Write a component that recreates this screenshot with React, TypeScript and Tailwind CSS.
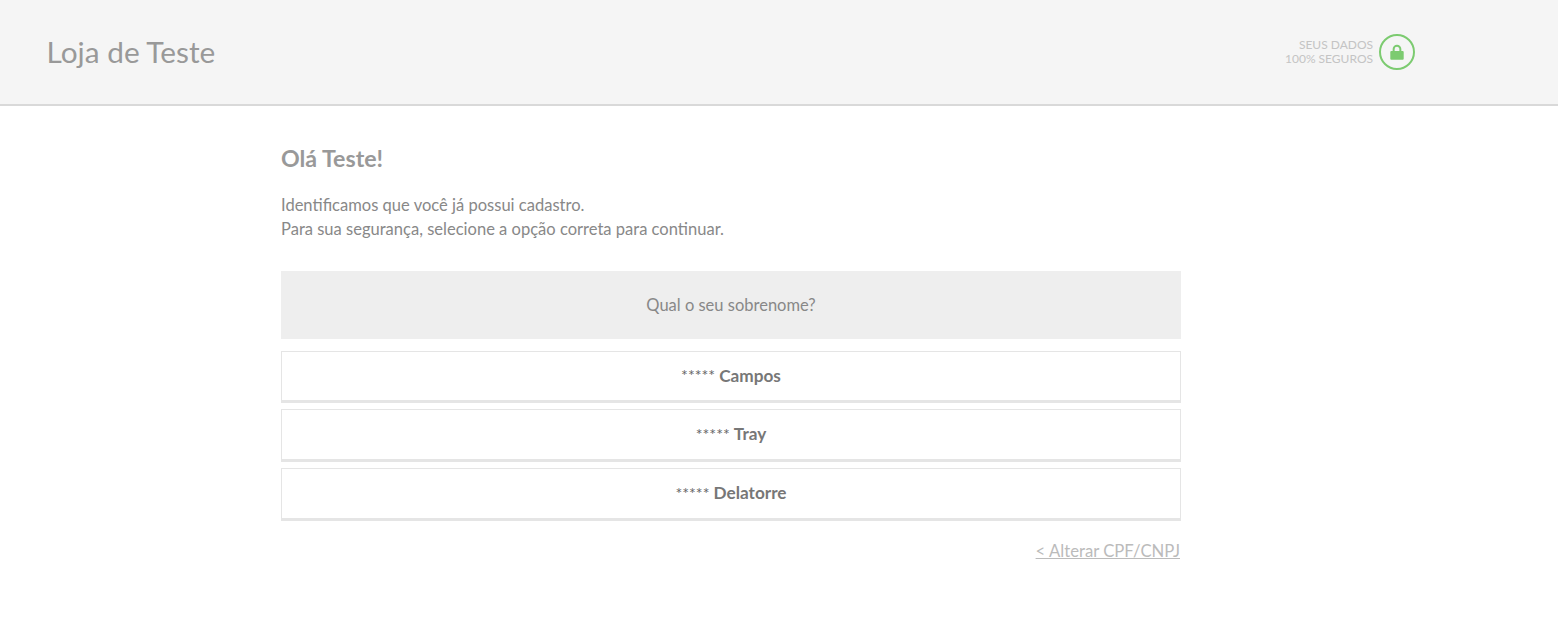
const answers = [
  { name: 'Campos' },
  { name: 'Tray' },
  { name: 'Delatorre' },
];

export default function App() {
  return (
    <div className="min-h-[627px] bg-white font-['Lato',sans-serif] text-[#888]">
      <header className="flex h-[106px] items-center justify-between border-b-2 border-[#d9d9d9] bg-[#f5f5f5] pl-[46.5px] pr-[143px]">
        <h1 className="text-[29.8px] leading-none text-[#999]">Loja de Teste</h1>
        <div className="flex items-center gap-[6px]">
          <p className="text-right text-[12px] leading-[14px] text-[#c4c4c4]">
            SEUS DADOS
            <br />
            100% SEGUROS
          </p>
          <div className="flex h-9 w-9 items-center justify-center rounded-full border-2 border-[#7ccb70]">
            <svg width="16" height="18" viewBox="0 0 16 18" fill="none">
              <path d="M4.65 8.5V6.05a3.35 3.35 0 0 1 6.7 0V8.5" stroke="#7ccb70" strokeWidth="2" />
              <rect x="1.3" y="8" width="13.4" height="8.7" rx="1" fill="#7ccb70" />
            </svg>
          </div>
        </div>
      </header>

      <main className="ml-[281px] w-[900px] pt-[37px]">
        <h2 className="text-[23.2px] font-bold leading-[30px] text-[#999]">Olá Teste!</h2>
        <p className="mt-5 text-[16.55px] leading-6">
          Identificamos que você já possui cadastro.
          <br />
          Para sua segurança, selecione a opção correta para continuar.
        </p>

        <div className="mt-[30px] flex h-[68px] items-center justify-center bg-[#eee] text-[16.5px]">
          Qual o seu sobrenome?
        </div>

        <div className="mt-[11.6px] flex flex-col gap-[6px]">
          {answers.map((a) => (
            <button
              key={a.name}
              className="flex h-[52.8px] items-center justify-center border border-b-[3px] border-[#e5e5e5] bg-white pb-px text-[16px] text-[#666]"
            >
              <span>*****&nbsp;</span>
              <span className="text-[17.2px] font-bold text-[#777]">{a.name}</span>
            </button>
          ))}
        </div>

        <div className="mt-[18.4px] pr-px text-right text-[16.7px] leading-6">
          <a href="#" className="text-[#bbb] underline">
            &lt; Alterar CPF/CNPJ
          </a>
        </div>
      </main>
    </div>
  );
}
